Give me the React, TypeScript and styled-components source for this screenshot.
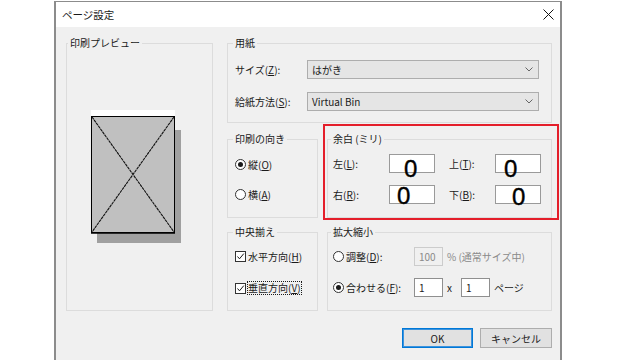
import React from "react";
import styled, { createGlobalStyle } from "styled-components";

const GlobalStyle = createGlobalStyle`
  html, body {
    margin: 0;
    padding: 0;
    background: #ffffff;
  }
  body {
    font-family: "Noto Sans CJK JP", "Noto Sans", sans-serif;
  }
`;

const Screen = styled.div`
  width: 640px;
  height: 360px;
  overflow: hidden;
  box-sizing: border-box;
  padding: 1px 0 0 54px;
  background: #ffffff;
`;

const Dialog = styled.div`
  width: 508px;
  height: 380px;
  box-sizing: border-box;
  border: 1px solid #8c8c8c;
  border-left-width: 2px;
  border-right-width: 2px;
  display: flex;
  flex-direction: column;
  background: #f0f0f0;
  color: #1a1a1a;
  font-size: 10px;
`;

const TitleBar = styled.div`
  height: 25px;
  flex: none;
  background: #ffffff;
  display: flex;
  align-items: center;
  justify-content: space-between;
  padding: 0 6px 0 6px;
  font-size: 10.5px;
`;

const Body = styled.div`
  padding: 8px 8px 0 10px;
  display: flex;
  flex-direction: column;
`;

const Main = styled.div`
  display: grid;
  grid-template-columns: 147px 325px;
  column-gap: 14px;
`;

const Column = styled.div`
  display: flex;
  flex-direction: column;
  gap: 8px;
`;

const Group = styled.fieldset<{ $pad?: string }>`
  margin: 0;
  min-width: 0;
  box-sizing: border-box;
  border: 1px solid #dcdcdc;
  padding: ${(p) => p.$pad ?? "0 7px"};
`;

const Legend = styled.legend`
  padding: 0 2px;
  margin-left: -2px;
  line-height: 16px;
  font-size: 10px;
`;

const PreviewArea = styled.div`
  height: 250px;
  display: flex;
  align-items: center;
  padding-left: 21px;
`;

const FormGrid = styled.div`
  display: grid;
  grid-template-columns: 72px 232px;
  grid-auto-rows: 19px;
  row-gap: 13px;
  align-items: center;
  margin: 9px 0 11px;
`;

const Select = styled.div`
  height: 19px;
  box-sizing: border-box;
  border: 1px solid #adadad;
  background: #e5e5e5;
  display: flex;
  align-items: center;
  justify-content: space-between;
  padding: 0 5px 0 4px;
`;

const Lower = styled.div`
  display: grid;
  grid-template-columns: 91px 225px;
  grid-template-rows: 87px 87px;
  column-gap: 9px;
  row-gap: 6px;
`;

const OptionList = styled.div<{ $top: number; $gap: number }>`
  display: flex;
  flex-direction: column;
  margin-top: ${(p) => p.$top}px;
  gap: ${(p) => p.$gap}px;
`;

const Option = styled.div`
  height: 16px;
  display: flex;
  align-items: center;
  gap: 2px;
  white-space: nowrap;
`;

const Radio = styled.span<{ $checked?: boolean }>`
  width: 11px;
  height: 11px;
  flex: none;
  box-sizing: border-box;
  border: 1px solid #333333;
  border-radius: 50%;
  background: #ffffff;
  display: flex;
  align-items: center;
  justify-content: center;
  &::after {
    content: "";
    width: 5px;
    height: 5px;
    border-radius: 50%;
    background: ${(p) => (p.$checked ? "#1a1a1a" : "transparent")};
  }
`;

const Check = styled.span`
  width: 11px;
  height: 11px;
  flex: none;
  box-sizing: border-box;
  border: 1px solid #333333;
  background: #ffffff;
  display: flex;
  align-items: center;
  justify-content: center;
`;

const Focused = styled.span`
  outline: 1px dotted #1a1a1a;
  outline-offset: 0;
  line-height: 12px;
`;

const Annotated = styled.div`
  position: relative;
  display: flex;
  flex-direction: column;
  &::after {
    content: "";
    position: absolute;
    top: -7px;
    left: -4px;
    right: -7px;
    bottom: -2px;
    border: 2px solid #e41e2a;
    pointer-events: none;
  }
  & > fieldset {
    flex: 1;
  }
`;

const MarginGrid = styled.div`
  display: grid;
  grid-template-columns: 56px 46px 60px 46px;
  grid-auto-rows: 19px;
  row-gap: 12px;
  align-items: center;
  margin-top: 7px;
`;

const SideLabel = styled.span<{ $indent?: number }>`
  padding-left: ${(p) => p.$indent ?? 0}px;
`;

const MarginBox = styled.div`
  height: 19px;
  box-sizing: border-box;
  border: 1px solid #9a9a9a;
  background: #ffffff;
  display: flex;
  align-items: flex-start;
`;

const Digit = styled.span<{ $x: number; $y: number }>`
  font-family: "Liberation Sans", Arial, sans-serif;
  font-size: 24px;
  line-height: 24px;
  color: #000000;
  -webkit-text-stroke: 0.4px #000000;
  margin-left: ${(p) => p.$x}px;
  margin-top: ${(p) => p.$y}px;
`;

const ScaleList = styled.div`
  display: flex;
  flex-direction: column;
  gap: 12px;
  margin-top: 7px;
`;

const ScaleRow = styled.div`
  height: 19px;
  display: flex;
  align-items: center;
`;

const Choice = styled(Option)`
  width: 81px;
`;

const SmallInput = styled.div<{ $disabled?: boolean; $gap?: number }>`
  width: 29px;
  height: 19px;
  box-sizing: border-box;
  margin-left: ${(p) => p.$gap ?? 0}px;
  border: 1px solid ${(p) => (p.$disabled ? "#cccccc" : "#8f8f8f")};
  background: ${(p) => (p.$disabled ? "#f0f0f0" : "#ffffff")};
  color: ${(p) => (p.$disabled ? "#8a8a8a" : "#1a1a1a")};
  display: flex;
  align-items: center;
  padding-left: 4px;
`;

const Suffix = styled.span<{ $muted?: boolean }>`
  margin-left: 4px;
  color: ${(p) => (p.$muted ? "#8a8a8a" : "#1a1a1a")};
  white-space: nowrap;
`;

const ButtonRow = styled.div`
  display: flex;
  justify-content: flex-end;
  gap: 7px;
  margin-top: 17px;
`;

const Button = styled.div<{ $primary?: boolean; $w: number }>`
  width: ${(p) => p.$w}px;
  height: 20px;
  box-sizing: border-box;
  background: #e1e1e1;
  border: 1px solid ${(p) => (p.$primary ? "#0078d7" : "#adadad")};
  box-shadow: ${(p) => (p.$primary ? "inset 0 0 0 1px #3d93dd" : "none")};
  display: flex;
  align-items: center;
  justify-content: center;
`;

const Chevron = () => (
  <svg width="8" height="5" viewBox="0 0 8 5">
    <path d="M0.5 0.5 L4 4 L7.5 0.5" fill="none" stroke="#666" strokeWidth="1" />
  </svg>
);

const CheckMark = () => (
  <svg width="9" height="9" viewBox="0 0 9 9">
    <path d="M1.5 4.5 L3.5 6.8 L7.8 1.6" fill="none" stroke="#1a1a1a" strokeWidth="1" />
  </svg>
);

const CloseIcon = () => (
  <svg width="11" height="11" viewBox="0 0 11 11">
    <path d="M0.5 0.5 L10.5 10.5 M10.5 0.5 L0.5 10.5" stroke="#111" strokeWidth="1" />
  </svg>
);

const PagePreview = () => (
  <svg width="90" height="133" viewBox="0 0 90 133">
    <rect x="6" y="20" width="84" height="113" fill="#a0a0a0" />
    <rect x="0" y="0" width="84" height="6" fill="#ffffff" />
    <rect x="0.5" y="6.5" width="83" height="116" fill="#c0c0c0" stroke="#000" strokeWidth="1" />
    <line x1="0" y1="123" x2="84" y2="123" stroke="#000" strokeWidth="1.5" />
    <path d="M1 7 L83 122 M83 7 L1 122" stroke="#111" strokeWidth="1.1" strokeDasharray="3 0.6" />
  </svg>
);

export default function App() {
  return (
    <>
      <GlobalStyle />
      <Screen>
        <Dialog>
          <TitleBar>
            <span>ページ設定</span>
            <CloseIcon />
          </TitleBar>
          <Body>
            <Main>
              <Group $pad="0 0 0 3px">
                <Legend>印刷プレビュー</Legend>
                <PreviewArea>
                  <PagePreview />
                </PreviewArea>
              </Group>
              <Column>
                <Group $pad="0 12px 0 7px">
                  <Legend>用紙</Legend>
                  <FormGrid>
                    <span>
                      サイズ(<u>Z</u>):
                    </span>
                    <Select>
                      <span>はがき</span>
                      <Chevron />
                    </Select>
                    <span>
                      給紙方法(<u>S</u>):
                    </span>
                    <Select>
                      <span>Virtual Bin</span>
                      <Chevron />
                    </Select>
                  </FormGrid>
                </Group>
                <Lower>
                  <Group>
                    <Legend>印刷の向き</Legend>
                    <OptionList $top={9} $gap={14}>
                      <Option>
                        <Radio $checked />
                        <span>
                          縦(<u>O</u>)
                        </span>
                      </Option>
                      <Option>
                        <Radio />
                        <span>
                          横(<u>A</u>)
                        </span>
                      </Option>
                    </OptionList>
                  </Group>
                  <Annotated>
                    <Group $pad="0 5px">
                      <Legend>余白 (ミリ)</Legend>
                      <MarginGrid>
                        <span>
                          左(<u>L</u>):
                        </span>
                        <MarginBox>
                          <Digit $x={14} $y={2}>0</Digit>
                        </MarginBox>
                        <SideLabel $indent={14}>
                          上(<u>T</u>):
                        </SideLabel>
                        <MarginBox>
                          <Digit $x={8} $y={2}>0</Digit>
                        </MarginBox>
                        <span>
                          右(<u>R</u>):
                        </span>
                        <MarginBox>
                          <Digit $x={7} $y={-2}>0</Digit>
                        </MarginBox>
                        <SideLabel $indent={14}>
                          下(<u>B</u>):
                        </SideLabel>
                        <MarginBox>
                          <Digit $x={16} $y={-1}>0</Digit>
                        </MarginBox>
                      </MarginGrid>
                    </Group>
                  </Annotated>
                  <Group>
                    <Legend>中央揃え</Legend>
                    <OptionList $top={8} $gap={16}>
                      <Option>
                        <Check>
                          <CheckMark />
                        </Check>
                        <span>
                          水平方向(<u>H</u>)
                        </span>
                      </Option>
                      <Option>
                        <Check>
                          <CheckMark />
                        </Check>
                        <Focused>
                          垂直方向(<u>V</u>)
                        </Focused>
                      </Option>
                    </OptionList>
                  </Group>
                  <Group $pad="0 5px">
                    <Legend>拡大縮小</Legend>
                    <ScaleList>
                      <ScaleRow>
                        <Choice>
                          <Radio />
                          <span>
                            調整(<u>D</u>):
                          </span>
                        </Choice>
                        <SmallInput $disabled>100</SmallInput>
                        <Suffix $muted>% (通常サイズ中)</Suffix>
                      </ScaleRow>
                      <ScaleRow>
                        <Choice>
                          <Radio $checked />
                          <span>
                            合わせる(<u>F</u>):
                          </span>
                        </Choice>
                        <SmallInput>1</SmallInput>
                        <Suffix>x</Suffix>
                        <SmallInput $gap={9}>1</SmallInput>
                        <Suffix>ページ</Suffix>
                      </ScaleRow>
                    </ScaleList>
                  </Group>
                </Lower>
              </Column>
            </Main>
            <ButtonRow>
              <Button $primary $w={71}>
                OK
              </Button>
              <Button $w={72}>キャンセル</Button>
            </ButtonRow>
          </Body>
        </Dialog>
      </Screen>
    </>
  );
}
